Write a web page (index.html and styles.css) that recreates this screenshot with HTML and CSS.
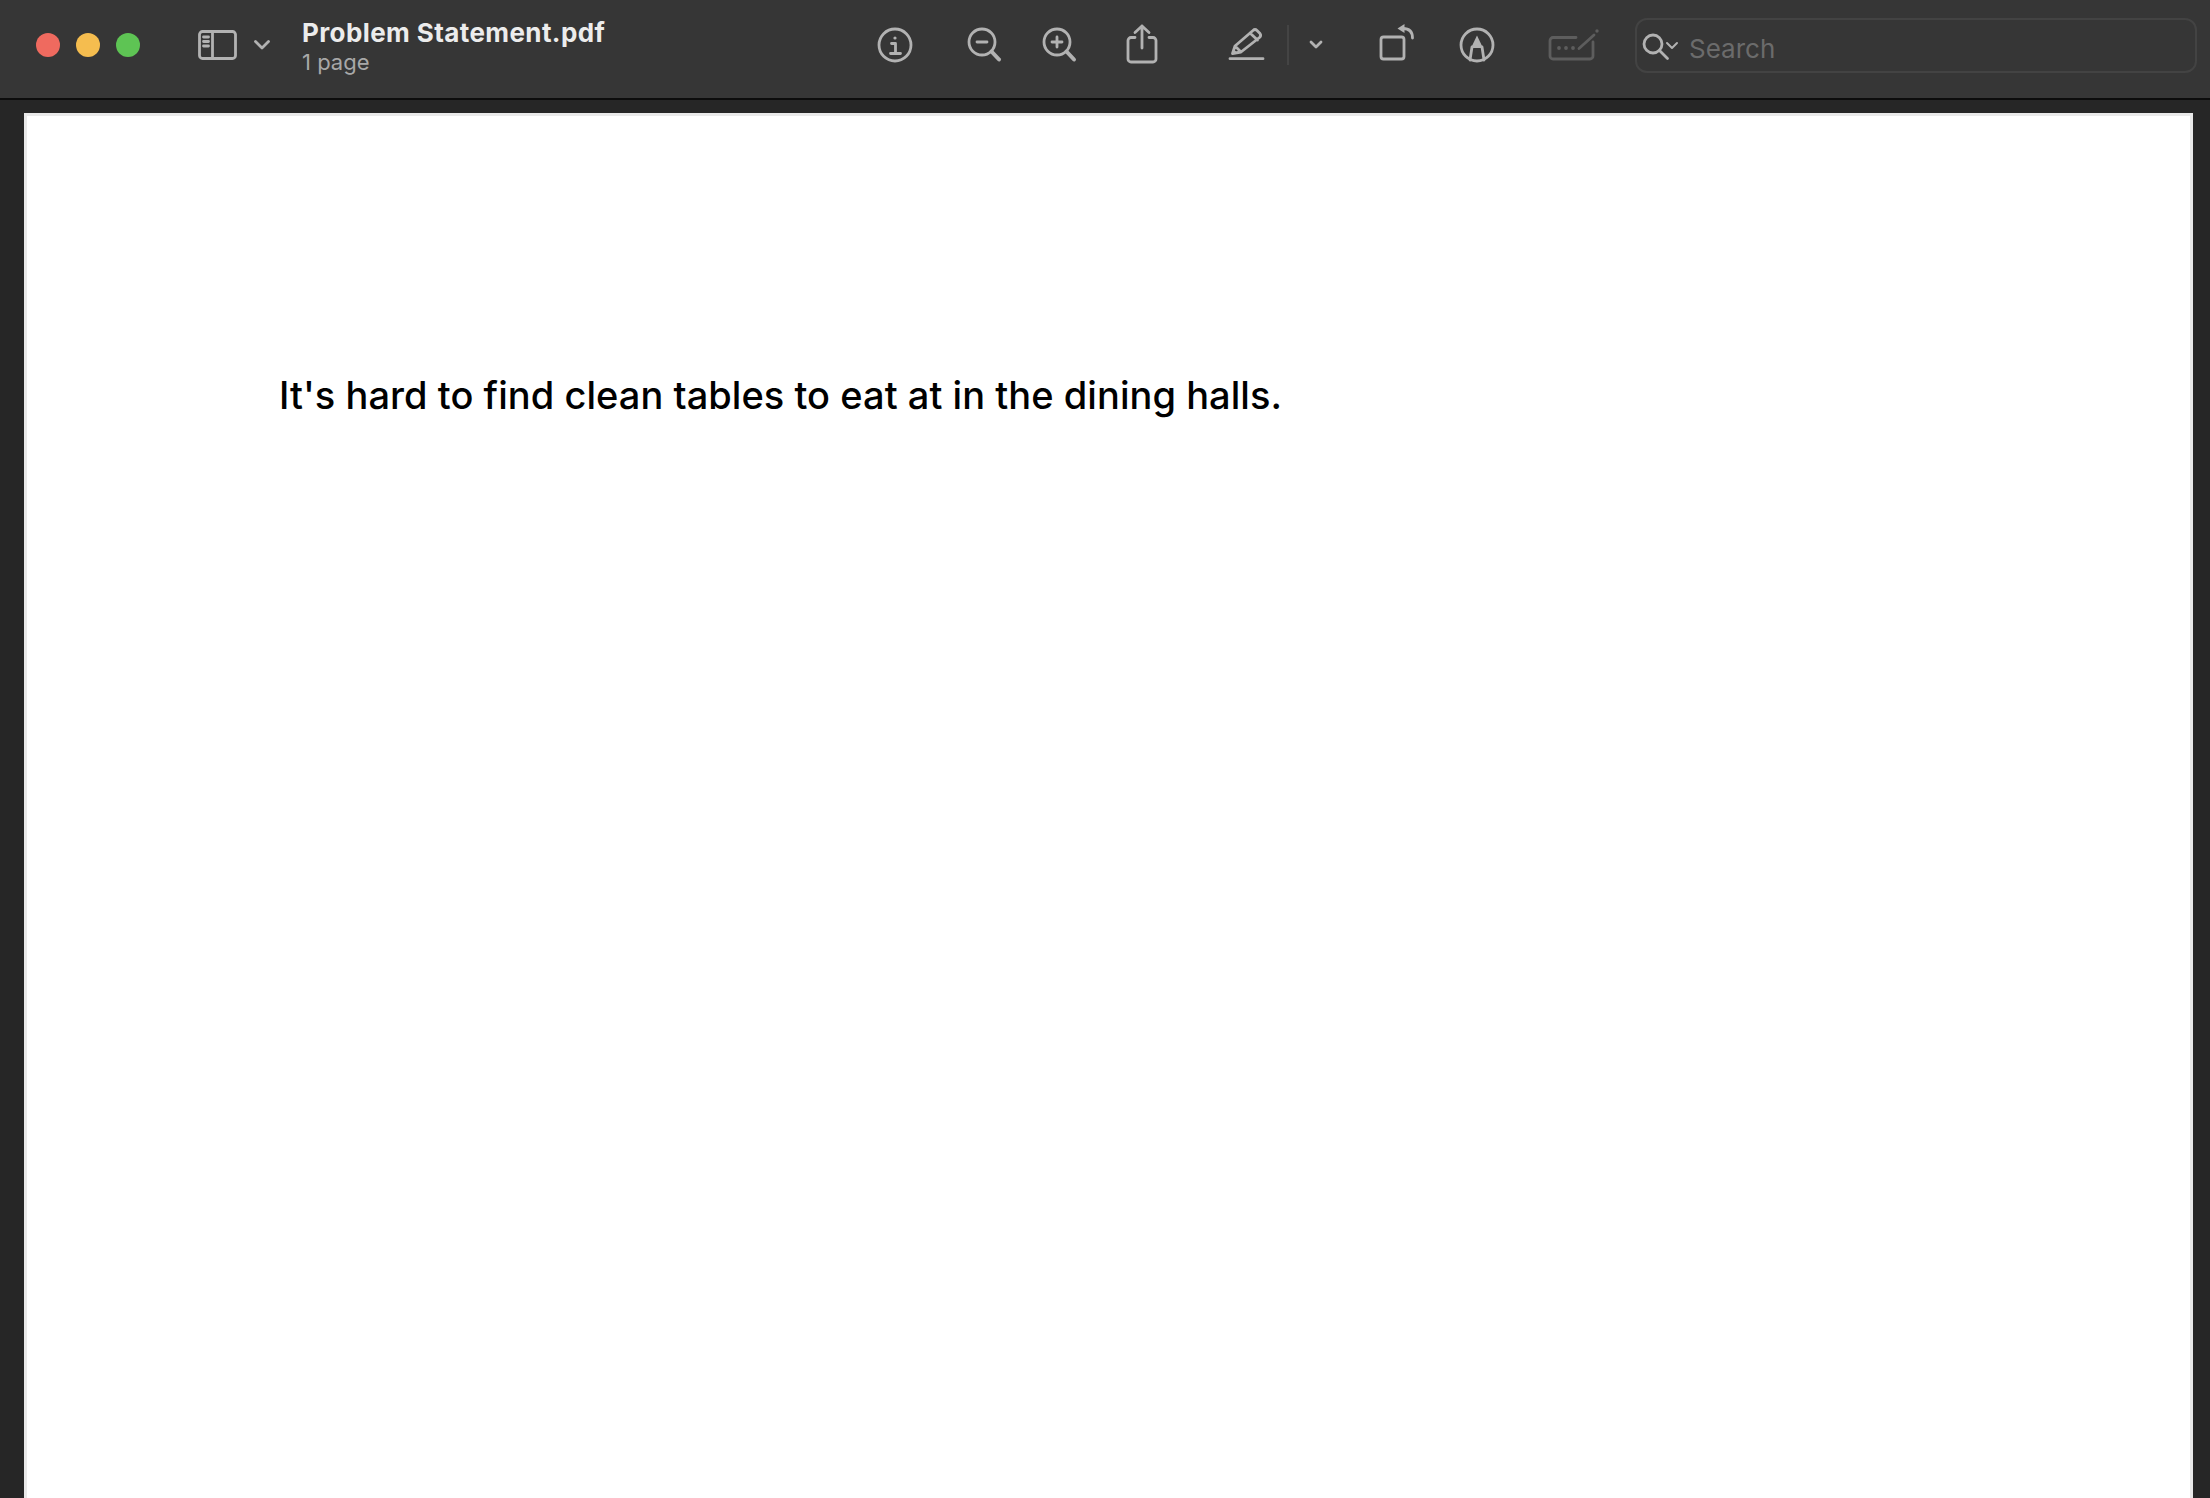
FILE: index.html
```html
<!DOCTYPE html>
<html>
<head>
<meta charset="UTF-8">
<title>Problem Statement.pdf</title>
<link rel="stylesheet" href="styles.css">
</head>
<body>
<div class="toolbar">
  <div class="lights">
    <span class="light red"></span>
    <span class="light yellow"></span>
    <span class="light green"></span>
  </div>
  <svg class="icon tool-sidebar" viewBox="0 0 40 40">
    <rect x="1.5" y="6.5" width="36" height="27" rx="3"/>
    <path d="M14.5 6.5V33.5M5.5 12H10.5M5.5 16.5H10.5M5.5 21H10.5"/>
  </svg>
  <svg class="chevron tool-sidebar-more" viewBox="0 0 16 16"><path d="M1.5 4.5L8 11L14.500 4.500"/></svg>
  <div class="doc-title">
    <div class="doc-name">Problem Statement.pdf</div>
    <div class="doc-pages">1 page</div>
  </div>
  <svg class="icon tool-info" viewBox="0 0 40 40">
    <circle cx="20" cy="20" r="16"/>
    <path d="M16.500 18.500H20.500V28.500M15.500 28.500H25.500"/>
    <circle class="solid" cx="20" cy="13" r="1.600"/>
  </svg>
  <svg class="icon tool-zoomout" viewBox="0 0 40 40">
    <circle cx="12" cy="17" r="13"/>
    <path class="thick" d="M21.500 26.500L29 34.500"/>
    <path d="M7 17H17"/>
  </svg>
  <svg class="icon tool-zoomin" viewBox="0 0 40 40">
    <circle cx="12" cy="17" r="13"/>
    <path class="thick" d="M21.500 26.500L29 34.500"/>
    <path d="M7 17H17M12 12V22"/>
  </svg>
  <svg class="icon tool-share" viewBox="0 0 40 40">
    <path d="M13 12.500H9a3 3 0 0 0-3 3V34a3 3 0 0 0 3 3H31a3 3 0 0 0 3-3V15.500a3 3 0 0 0-3-3H27"/>
    <path d="M20 1V23M13 7.500L20 1L27 7.500"/>
  </svg>
  <svg class="icon tool-pencil" viewBox="0 0 40 40">
    <path d="M5.500 28.500L8 21L26 5.500Q28 3.500 30 5.500L33 8.500Q34.500 10.500 32.500 12.500L14 27ZM23 8L30.500 15M8 21L14 27"/>
    <path class="solid" d="M5 29L6.500 24L10 27.500Z"/>
    <path d="M3 33.700H36"/>
  </svg>
  <span class="divider"></span>
  <svg class="chevron tool-pencil-more" viewBox="0 0 16 16"><path d="M3 5L8 10L13 5"/></svg>
  <svg class="icon tool-rotate" viewBox="0 0 40 40">
    <rect x="8" y="12" width="23" height="22" rx="2.500"/>
    <path d="M30 3.500Q39.500 3.500 39.500 13"/>
    <path class="solid" d="M24.500 3.500L31.500 -1V8Z"/>
  </svg>
  <svg class="icon tool-markup" viewBox="0 0 40 40">
    <circle cx="20" cy="20" r="16"/>
    <path d="M15 22L13 35M25 22L27 35"/>
    <path class="solid" d="M20 10.500L26 23H14Z"/>
  </svg>
  <svg class="icon wide off tool-sign" viewBox="0 0 52 40">
    <path d="M28 12.500H5a3 3 0 0 0-3 3V31a3 3 0 0 0 3 3H42a3 3 0 0 0 3-3V17"/>
    <path d="M31 23.500L46 10"/>
    <circle class="solid" cx="11" cy="23" r="1.900"/>
    <circle class="solid" cx="18" cy="23" r="1.900"/>
    <circle class="solid" cx="25" cy="23" r="1.900"/>
    <circle class="solid" cx="49" cy="6" r="1.700"/>
  </svg>
  <div class="search">
    <svg class="icon search-icon" viewBox="0 0 40 40">
      <circle cx="13" cy="19" r="9"/>
      <path d="M19.500 25.500L27.500 33.500"/>
      <path class="fine" d="M27 18L32 23L37 18"/>
    </svg>
    <span class="search-text">Search</span>
  </div>
</div>
<div class="viewer">
  <div class="page">
    <p class="page-text">It's hard to find clean tables to eat at in the dining halls.</p>
  </div>
</div>
</body>
</html>
```

FILE: styles.css
```css
html, body {
	margin: 0;
	padding: 0;
	height: 100%;
	overflow: hidden;
	background: #262626;
}

body {
	display: flex;
	flex-direction: column;
	font-family: Inter, "Liberation Sans", sans-serif;
}

.toolbar {
	display: flex;
	align-items: center;
	flex: none;
	box-sizing: border-box;
	height: 100px;
	padding: 0 0 8px 36px;
	background: #363636;
	border-bottom: 2px solid #0c0c0c;
}

.lights {
	display: flex;
	gap: 16px;
}

.light {
	width: 24px;
	height: 24px;
	border-radius: 50%;
}

.red { background: #ef6a5f; }
.yellow { background: #f5bd4f; }
.green { background: #5ec454; }

.icon {
	flex: none;
	width: 40px;
	height: 40px;
	overflow: visible;
	fill: none;
	stroke: #b2b2b2;
	stroke-width: 2.8;
	stroke-linecap: round;
	stroke-linejoin: round;
}

.icon .solid {
	fill: #b2b2b2;
	stroke: none;
}

.icon .thick {
	stroke-width: 4;
}

.icon .fine {
	stroke-width: 2;
}

.wide {
	width: 52px;
}

.off {
	stroke: #5d5d5d;
}

.icon.off .solid {
	fill: #5d5d5d;
}

.chevron {
	flex: none;
	width: 16px;
	height: 16px;
	fill: none;
	stroke: #b2b2b2;
	stroke-width: 2.8;
	stroke-linecap: round;
	stroke-linejoin: round;
}

.tool-sidebar { margin-left: 58px; }
.tool-sidebar-more { margin-left: 16px; }
.tool-info { margin-left: 273px; }
.tool-zoomout { margin-left: 55px; }
.tool-zoomin { margin-left: 35px; }
.tool-share { margin-left: 37px; }
.tool-pencil { margin-left: 65px; }
.tool-pencil-more { margin-left: 19px; }
.tool-rotate { margin-left: 49px; }
.tool-markup { margin-left: 44px; }
.tool-sign { margin-left: 51px; }

.doc-title {
	flex: none;
	width: 300px;
	margin-left: 32px;
	padding-top: 4px;
}

.doc-name {
	font-size: 26px;
	line-height: 29px;
	font-weight: 700;
	letter-spacing: 0.4px;
	color: #ececec;
	white-space: nowrap;
}

.doc-pages {
	font-size: 22px;
	line-height: 30px;
	color: #a8a8a8;
}

.divider {
	flex: none;
	width: 2px;
	height: 40px;
	margin-left: 20px;
	background: #444444;
}

.search {
	display: flex;
	align-items: center;
	flex: none;
	box-sizing: border-box;
	width: 562px;
	height: 55px;
	margin-left: 35px;
	padding-left: 3px;
	border: 2px solid #434343;
	border-radius: 12px;
}

.search-text {
	margin-left: 9px;
	padding-top: 6px;
	font-size: 26px;
	color: #6b6b6b;
}

.viewer {
	flex: 1;
	padding: 13px 17px 0 24px;
}

.page {
	box-sizing: border-box;
	height: 100%;
	padding: 256px 0 0 252px;
	background: #ffffff;
	border: solid #e9e9e9;
	border-width: 3px 3px 0 3px;
}

.page-text {
	margin: 0;
	font-size: 38px;
	line-height: 46px;
	font-weight: 500;
	letter-spacing: 0.05px;
	color: #000000;
	white-space: nowrap;
}
```
